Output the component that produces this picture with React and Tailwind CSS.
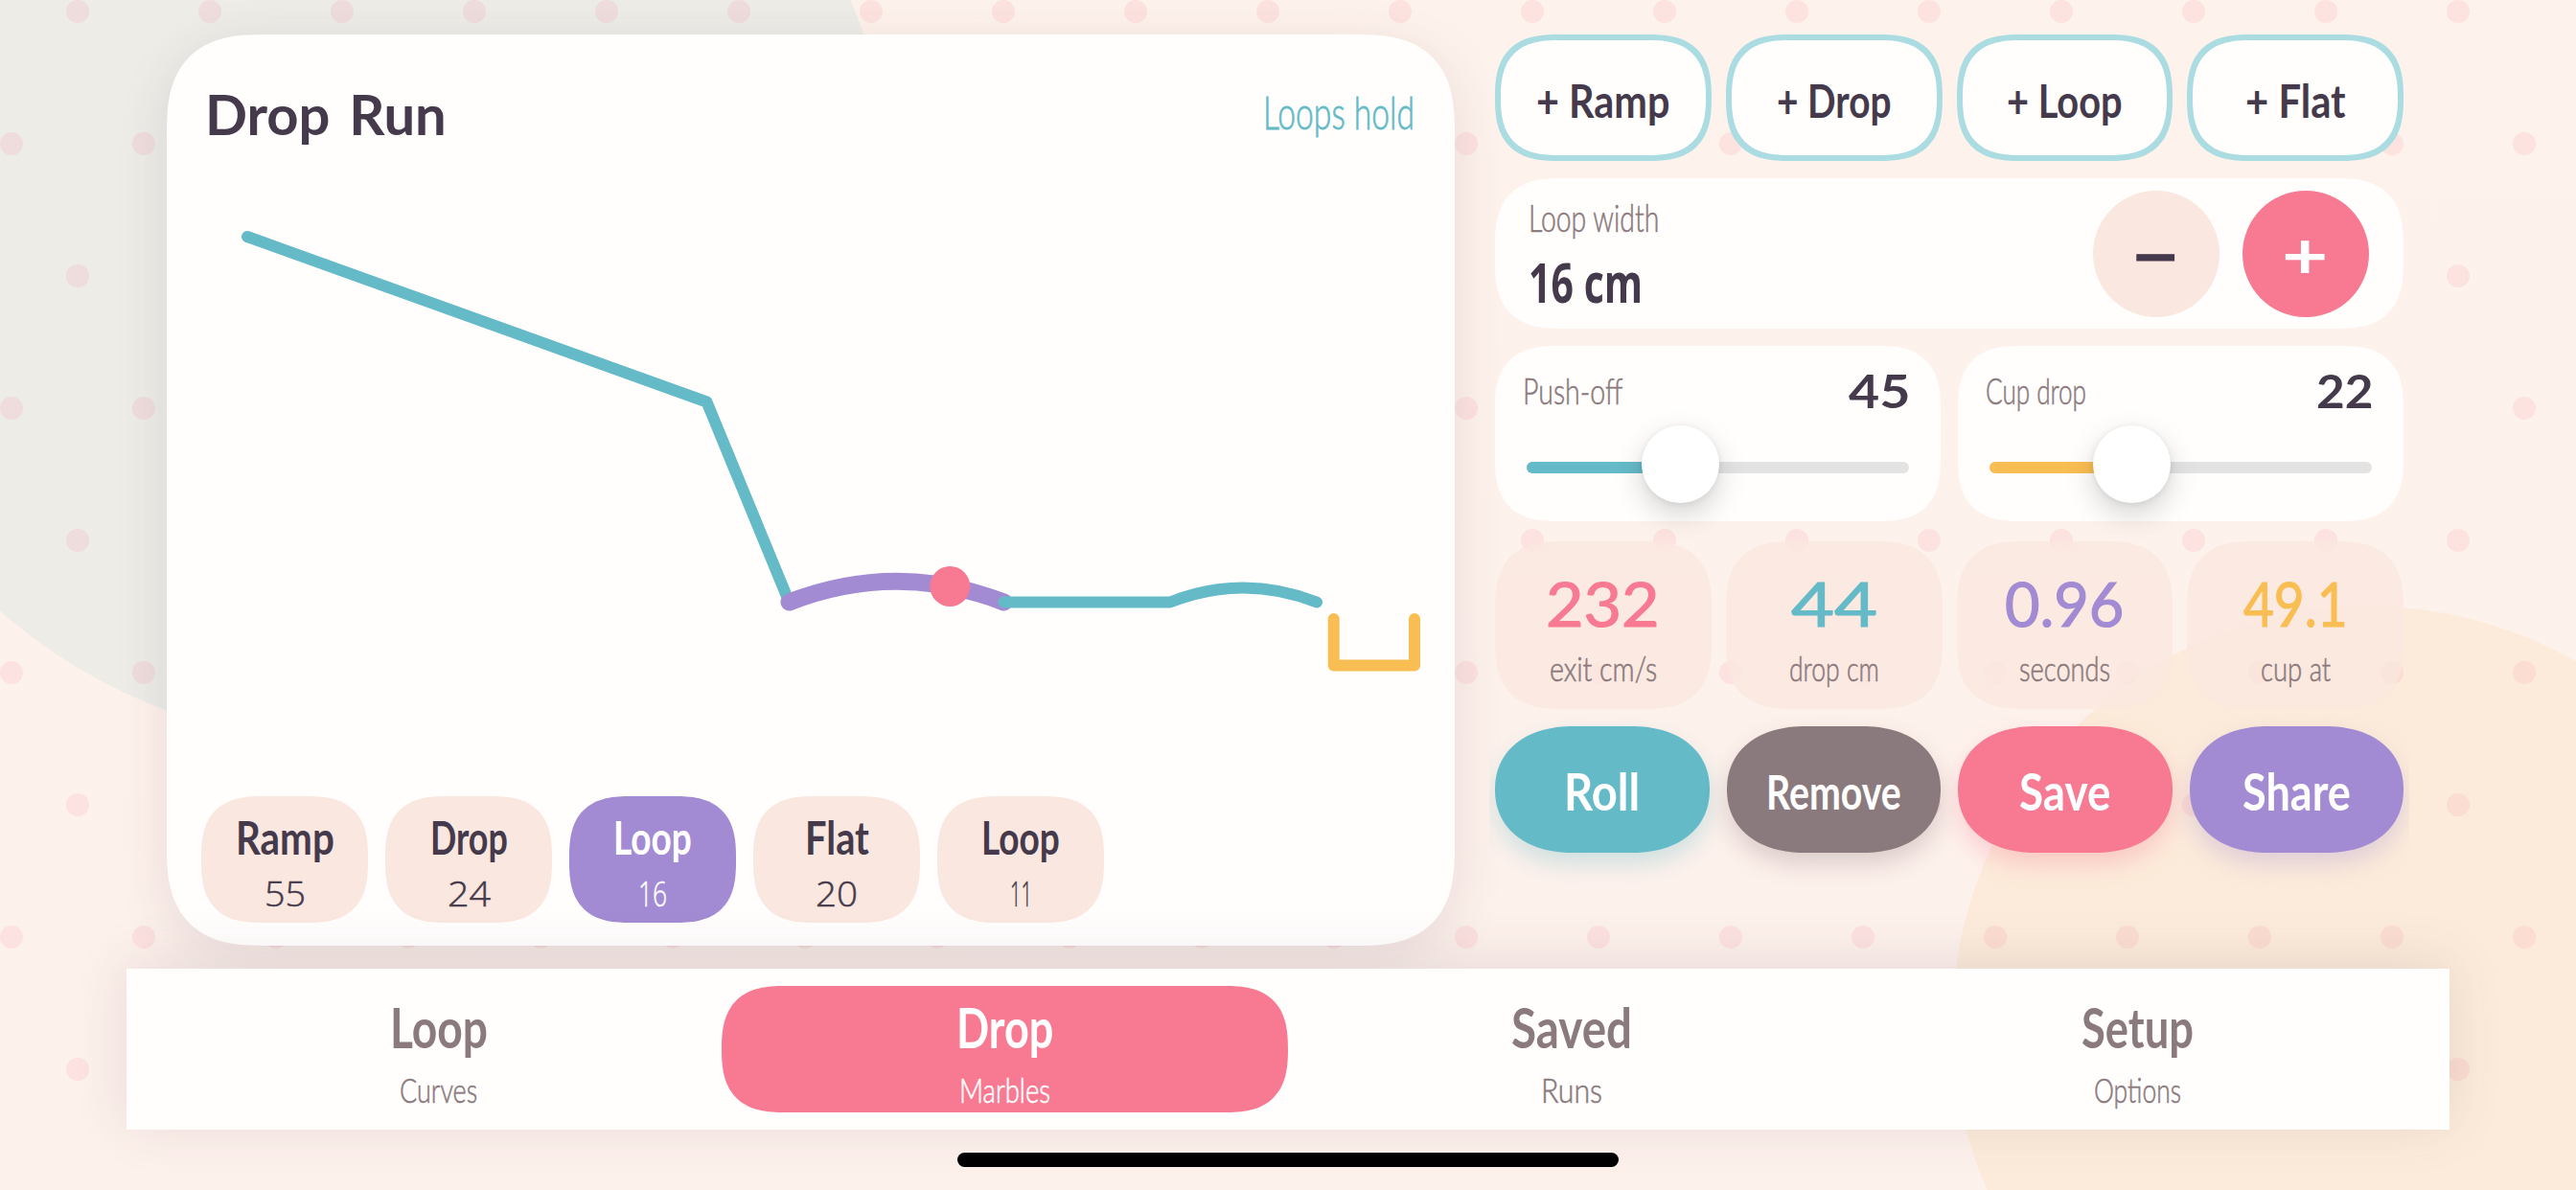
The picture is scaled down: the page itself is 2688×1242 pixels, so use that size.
import { useLayoutEffect, useRef, useState } from "react";

// Lettering squeezed or stretched to a fixed measure; its box is the cap height.
// The span overhangs the box by 2px a side to make up for the glyphs' side bearings.
function T({ w, className = "", children }) {
  const ref = useRef(null);
  const [scale, setScale] = useState(1);
  useLayoutEffect(() => {
    const fit = () => ref.current && setScale((w + 4) / ref.current.offsetWidth);
    fit();
    document.fonts?.ready.then(fit);
  }, [w]);
  return (
    <div className={`shrink-0 text-left whitespace-nowrap ${className}`} style={{ width: w }}>
      <span
        ref={ref}
        className="-ml-[2px] inline-block origin-left -translate-y-[0.01em] align-top"
        style={{ transform: `scaleX(${scale})` }}
      >
        {children}
      </span>
    </div>
  );
}

const addButtons = [
  ["+ Ramp", 135],
  ["+ Drop", 116],
  ["+ Loop", 117],
  ["+ Flat", 101],
];

const chips = [
  ["Ramp", 99, "55", 39],
  ["Drop", 77, "24", 41],
  ["Loop", 78, "16", 26],
  ["Flat", 63, "20", 40],
  ["Loop", 78, "11", 19],
];

const stats = [
  ["232", 115, "exit cm/s", 108, "text-[#f77a92]"],
  ["44", 86, "drop cm", 90, "text-[#65bac7]"],
  ["0.96", 121, "seconds", 91, "text-[#a28bd3]"],
  ["49.1", 105, "cup at", 69, "text-[#f9be53]"],
];

const actions = [
  ["Roll", 75, "bg-[#65bac7] shadow-[0_12px_24px_rgba(101,186,199,0.3)]", "text-[53px] leading-[38px]"],
  ["Remove", 137, "bg-[#8b7a7d] shadow-[0_12px_24px_rgba(139,122,125,0.3)]", "text-[49px] leading-[37px]"],
  ["Save", 91, "bg-[#f77a92] shadow-[0_12px_24px_rgba(247,122,146,0.3)]", "text-[53px] leading-[38px]"],
  ["Share", 109, "bg-[#a28bd3] shadow-[0_12px_24px_rgba(162,139,211,0.3)]", "text-[53px] leading-[38px]"],
];

const tabs = [
  ["Loop", 98, "Curves", 77],
  ["Drop", 97, "Marbles", 91],
  ["Saved", 122, "Runs", 60],
  ["Setup", 113, "Options", 87],
];

function Track() {
  return (
    <svg viewBox="174 141 1344 690" className="h-[690px] w-[1344px]" fill="none" strokeLinecap="round" strokeLinejoin="round" strokeWidth="12">
      <path d="M258 247 L737.5 419.5 L823.5 628.5" stroke="#65bac7" />
      <path d="M823.5 628.5 Q935.5 585 1047.5 628.5" stroke="#a28bd3" strokeWidth="18" />
      <path d="M1047.5 628.5 H1221 Q1297.5 598.5 1374 628.5" stroke="#65bac7" />
      <path d="M1391.7 646 V694.5 H1476 V646" stroke="#f9be53" />
      <circle cx="991.3" cy="612" r="21" fill="#f77a92" />
    </svg>
  );
}

function SliderCard({ label, lw, value, vw, fill, knob }) {
  return (
    <div className="h-[183px] w-[465px] rounded-[66px] bg-[#fffefd] pt-[29px] [corner-shape:superellipse(1.4)]">
      <div className="flex justify-between pr-[33px] pl-[31px]">
        <T w={lw} className="mt-[4px] text-[37px] leading-[27px] font-light text-[#8b7a7d] [-webkit-text-stroke:0.6px]">{label}</T>
        <T w={vw} className="mt-[1px] text-[47px] leading-[34px] font-bold text-[#453a4b]">{value}</T>
      </div>
      <div className="relative mx-[33px] mt-[57px] h-[12px] rounded-full bg-[#e3e3e3]">
        <div className={`h-full rounded-full ${fill}`} />
        <div className={`absolute top-[-38px] size-[81px] rounded-full bg-white shadow-[0_12px_30px_rgba(0,0,0,0.17),0_1px_6px_rgba(0,0,0,0.08)] ${knob}`} />
      </div>
    </div>
  );
}

export default function App() {
  return (
    <div className="relative isolate h-[1242px] w-[2688px] overflow-hidden bg-linear-to-b from-[#fef2ec] to-[#fdf1ec] font-['Lato',sans-serif]">
      <div className="absolute top-[-345px] left-[-191px] -z-10 size-[1122px] rounded-full bg-[#edece7]" />
      <div className="absolute top-[633px] left-[2037px] -z-10 size-[870px] rounded-full bg-[#fcebda]" />
      <div className="absolute inset-0 -z-10 bg-[radial-gradient(circle_at_81px_12px,rgba(247,122,146,0.13)_11.5px,transparent_12.5px),radial-gradient(circle_at_12px_150px,rgba(247,122,146,0.13)_11.5px,transparent_12.5px)] bg-size-[138px_276px]" />

      <main className="flex gap-[42px] pt-[36px] pl-[174px]">
        <section className="flex h-[951px] w-[1344px] flex-col rounded-[102px] bg-[#fffefd] shadow-[0_12px_54px_rgba(70,58,76,0.12)] [corner-shape:superellipse(1.4)]">
          <div className="flex h-[105px] shrink-0 justify-between pt-[64px] pr-[44px] pl-[42px]">
            <T w={248} className="text-[57px] leading-[41px] font-bold [word-spacing:0.1em] text-[#453a4b]">Drop Run</T>
            <T w={154} className="text-[47px] leading-[34px] font-light text-[#65bac7] [-webkit-text-stroke:0.8px]">Loops hold</T>
          </div>
          <Track />
          <div className="flex gap-[18px] pl-[36px]">
            {chips.map(([name, nw, val, vw], i) => (
              <div
                key={i}
                className={`flex h-[132px] w-[174px] flex-col items-center rounded-[64px] pt-[26px] [corner-shape:superellipse(1.4)] ${i === 2 ? "bg-[#a28bd3] text-white" : "bg-[#fae7e0] text-[#453a4b]"}`}
              >
                <T w={nw} className="text-[47px] leading-[34px] font-bold">{name}</T>
                <T w={vw} className="mt-[29px] font-['Open_Sans',sans-serif] text-[36px] leading-[26px] font-light [-webkit-text-stroke:0.5px]">{val}</T>
              </div>
            ))}
          </div>
        </section>

        <section className="w-[948px]">
          <div className="grid grid-cols-4 gap-[15px]">
            {addButtons.map(([label, w]) => (
              <button key={label} className="flex h-[132px] justify-center rounded-[66px] border-6 border-[#abdce1] bg-[#fffefd] pt-[46px] text-[#453a4b] [corner-shape:superellipse(1.4)]">
                <T w={w} className="text-[47px] leading-[34px] font-bold">{label}</T>
              </button>
            ))}
          </div>

          <div className="mt-[18px] flex h-[157px] items-center rounded-[70px] bg-[#fffefd] pr-[36px] pl-[37px] [corner-shape:superellipse(1.4)]">
            <div className="grow self-start pt-[27px]">
              <T w={132} className="text-[39px] leading-[28px] font-light text-[#8b7a7d] [-webkit-text-stroke:0.6px]">Loop width</T>
              <T w={115} className="mt-[33px] font-['Open_Sans',sans-serif] text-[58px] leading-[42px] font-bold text-[#453a4b]">16 cm</T>
            </div>
            <button className="flex size-[132px] justify-center rounded-full bg-[#fae7e0] pt-[45px] pr-[3px] text-[#453a4b]">
              <T w={46} className="text-[66px] leading-[46px] font-bold [-webkit-text-stroke:1px]">−</T>
            </button>
            <button className="ml-[24px] flex size-[132px] justify-center rounded-full bg-[#f77a92] pt-[45px] pr-[3px] text-white">
              <T w={44} className="text-[66px] leading-[46px] font-bold">+</T>
            </button>
          </div>

          <div className="mt-[18px] flex gap-[18px]">
            <SliderCard label="Push-off" lw={100} value="45" vw={61} fill="w-[160px] bg-[#65bac7]" knob="left-[120px]" />
            <SliderCard label="Cup drop" lw={101} value="22" vw={56} fill="w-[148px] bg-[#f9be53]" knob="left-[108px]" />
          </div>

          <div className="mt-[21px] grid grid-cols-4 gap-[15px]">
            {stats.map(([value, vw, label, lw, color]) => (
              <div key={label} className="flex h-[175px] flex-col items-center rounded-[70px] bg-[#fae7e0]/80 pt-[43px] [corner-shape:superellipse(1.4)]">
                <T w={vw} className={`text-[63px] leading-[45px] [-webkit-text-stroke:1.2px] ${color}`}>{value}</T>
                <T w={lw} className="mt-[32px] text-[35px] leading-[25px] font-light text-[#8b7a7d] [-webkit-text-stroke:0.6px]">{label}</T>
              </div>
            ))}
          </div>

          <div className="mt-[18px] grid grid-cols-4 gap-[18px] [clip-path:inset(-40px_-6px_-60px)]">
            {actions.map(([label, w, look, size]) => (
              <button key={label} className={`flex h-[132px] justify-center rounded-[82px/66px] pt-[50px] text-white [corner-shape:superellipse(1.14)] ${look}`}>
                <T w={w} className={`font-bold ${size}`}>{label}</T>
              </button>
            ))}
          </div>
        </section>
      </main>

      <nav className="relative mt-[24px] ml-[132px] flex h-[168px] w-[2424px] bg-[#fffefd] px-[30px] pt-[18px] shadow-[0_-6px_54px_rgba(70,58,76,0.12)]">
        {tabs.map(([name, nw, sub, sw], i) => (
          <div
            key={name}
            className={`flex h-[132px] w-[591px] flex-col items-center rounded-[66px] pt-[24px] [corner-shape:superellipse(1.4)] ${i === 1 ? "bg-[#f77a92] text-white" : "text-[#8b7a7d]"}`}
          >
            <T w={nw} className="text-[57px] leading-[41px] font-bold">{name}</T>
            <T w={sw} className="mt-[30px] text-[36px] leading-[26px] font-light [-webkit-text-stroke:0.6px]">{sub}</T>
          </div>
        ))}
      </nav>
      <div className="relative mt-[24px] ml-[999px] h-[15px] w-[690px] rounded-full bg-black" />
    </div>
  );
}
